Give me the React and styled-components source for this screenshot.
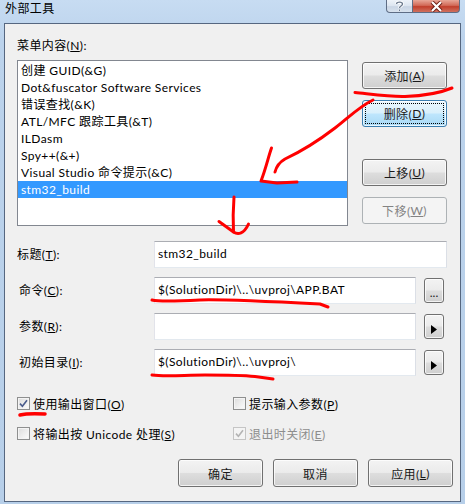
import React from "react";
import styled, { createGlobalStyle, css } from "styled-components";

const GlobalStyle = createGlobalStyle`
  html, body { margin: 0; padding: 0; }
  body {
    font-family: Lato, "Noto Sans CJK SC", sans-serif;
    font-size: 12px;
    letter-spacing: 0.4px;
    color: #000;
  }
  u { text-underline-offset: 1px; }
`;

const Window = styled.div`
  position: relative;
  width: 465px;
  height: 504px;
  box-sizing: border-box;
  padding: 0 4px 2px 4px;
  background: linear-gradient(to bottom, #c7dcf2 0px, #bcd3ec 40px, #b7cfe9 100%);
  display: flex;
  flex-direction: column;
  overflow: hidden;
`;

const TitleBar = styled.div`
  height: 23px;
  display: flex;
  justify-content: space-between;
  align-items: flex-start;
`;

const Title = styled.div`
  padding: 1px 0 0 1px;
  line-height: 16px;
`;

const CaptionButtons = styled.div`
  display: flex;
  margin-right: 1px;
`;

const CaptionButton = styled.div`
  box-sizing: border-box;
  height: 13px;
  width: ${(p) => p.$w}px;
  border: 1px solid #5e6d85;
  border-top: none;
  display: flex;
  align-items: center;
  justify-content: center;
  ${(p) =>
    p.$close
      ? css`
          border-left: none;
          border-radius: 0 0 4px 0;
          background: linear-gradient(to bottom, #e8a798 0%, #d26a58 45%, #c13f2c 55%, #d0715f 100%);
        `
      : css`
          border-radius: 0 0 0 4px;
          background: linear-gradient(to bottom, #eef3f9 0%, #dce5f0 50%, #c9d5e4 55%, #d8e2ee 100%);
        `}
`;

const Client = styled.div`
  flex: 1;
  background: #f0f0f0;
  border: 1px solid #566780;
  padding: 14px 7px 0 12px;
  display: flex;
  flex-direction: column;
`;

const TopSection = styled.div`
  display: flex;
  gap: 14px;
`;

const ListColumn = styled.div`
  display: flex;
  flex-direction: column;
`;

const Label = styled.div`
  line-height: 16px;
  margin-bottom: 6px;
`;

const ListBox = styled.div`
  box-sizing: border-box;
  width: 331px;
  height: 166px;
  border: 1px solid #828790;
  background: #fff;
  padding: 1px 0;
`;

const ListItem = styled.div`
  height: 17px;
  line-height: 17px;
  padding-left: 3px;
  white-space: nowrap;
  ${(p) =>
    p.$selected &&
    css`
      background: #3399ff;
      color: #fff;
    `}
`;

const SideButtons = styled.div`
  display: flex;
  flex-direction: column;
  padding-top: 24px;
`;

const Button = styled.div`
  box-sizing: border-box;
  width: 85px;
  height: ${(p) => p.$h || 27}px;
  margin-top: ${(p) => p.$mt || 0}px;
  border: 1px solid #707070;
  border-radius: 3px;
  background: linear-gradient(to bottom, #f3f3f3 0%, #ebebeb 48%, #dddddd 52%, #cfcfcf 100%);
  box-shadow: inset 0 0 0 1px rgba(255, 255, 255, 0.75);
  display: flex;
  align-items: center;
  justify-content: center;
  color: #1a1a1a;
  position: relative;
  ${(p) =>
    p.$focused &&
    css`
      border-color: #3c7fb1;
      background: linear-gradient(to bottom, #eaf6fd 0%, #d9f0fc 48%, #bee6fd 52%, #a7d9f5 100%);
      &::after {
        content: "";
        position: absolute;
        inset: 2px;
        border: 1px dotted #000;
      }
    `}
  ${(p) =>
    p.$disabled &&
    css`
      border-color: #adb2b5;
      background: #f4f4f4;
      box-shadow: none;
      color: #838383;
    `}
`;

const Fields = styled.div`
  display: flex;
  flex-direction: column;
  gap: 9px;
  margin-top: 15px;
  width: 430px;
`;

const FieldRow = styled.div`
  display: flex;
  align-items: center;
  height: 27px;
`;

const FieldLabel = styled.div`
  width: 137px;
  box-sizing: border-box;
  padding-left: ${(p) => p.$indent || 0}px;
  margin-top: -2px;
`;

const TextBox = styled.div`
  box-sizing: border-box;
  width: ${(p) => p.$w}px;
  height: 27px;
  border: 1px solid;
  border-color: #abadb3 #dbdfe6 #e3e9ef #e2e3ea;
  background: #fff;
  padding-left: 3px;
  line-height: 24px;
  white-space: nowrap;
  overflow: hidden;
`;

const SmallButton = styled(Button)`
  width: 20px;
  height: 25px;
  margin-left: 8px;
  line-height: 12px;
  padding-top: 5px;
  letter-spacing: 0;
`;

const Checks = styled.div`
  display: grid;
  grid-template-columns: 216px 1fr;
  row-gap: 13px;
  margin-top: 19px;
`;

const CheckRow = styled.div`
  display: flex;
  align-items: center;
  gap: 3px;
  height: 17px;
  color: ${(p) => (p.$disabled ? "#8d8d8d" : "#000")};
`;

const Box = styled.span`
  box-sizing: border-box;
  width: 13px;
  height: 13px;
  border: 1px solid ${(p) => (p.$disabled ? "#c5c5c5" : "#8e8f8f")};
  background: ${(p) =>
    p.$disabled ? "#f4f4f4" : "linear-gradient(135deg, #dcdcdc 0%, #f0f0f0 60%, #fdfdfd 100%)"};
  box-shadow: inset 0 0 0 1px #f4f4f4;
  display: flex;
  align-items: center;
  justify-content: center;
`;

const BottomButtons = styled.div`
  display: flex;
  justify-content: flex-end;
  gap: 10px;
  margin-top: 17px;
`;

const Overlay = styled.svg`
  position: absolute;
  left: 0;
  top: 0;
  pointer-events: none;
`;

const items = [
  "创建 GUID(&G)",
  "Dot&fuscator Software Services",
  "错误查找(&K)",
  "ATL/MFC 跟踪工具(&T)",
  "ILDasm",
  "Spy++(&+)",
  "Visual Studio 命令提示(&C)",
  "stm32_build",
];

function Check({ checked, disabled, children }) {
  return (
    <CheckRow $disabled={disabled}>
      <Box $disabled={disabled}>
        {checked && (
          <svg width="9" height="9" viewBox="0 0 9 9">
            <path
              d="M1 4.6 L3.4 7.2 L8 1.2"
              fill="none"
              stroke={disabled ? "#b4b4b4" : "#4a5c8c"}
              strokeWidth="1.6"
            />
          </svg>
        )}
      </Box>
      <span>{children}</span>
    </CheckRow>
  );
}

const Arrow = () => (
  <svg width="6" height="9" viewBox="0 0 6 9">
    <path d="M0 0 L6 4.5 L0 9 Z" fill="#000" />
  </svg>
);

export default function App() {
  return (
    <>
      <GlobalStyle />
      <Window>
        <TitleBar>
          <Title>外部工具</Title>
          <CaptionButtons>
            <CaptionButton $w={27}>
              <svg width="9" height="11" viewBox="0 0 9 11">
                <path
                  d="M1.5 3 C1.5 0.5 7.5 0.5 7.5 3 C7.5 5 4.5 5 4.5 7 M4.5 8.5 L4.5 10"
                  fill="none"
                  stroke="#fff"
                  strokeWidth="3"
                />
                <path
                  d="M1.5 3 C1.5 0.5 7.5 0.5 7.5 3 C7.5 5 4.5 5 4.5 7 M4.5 8.5 L4.5 10"
                  fill="none"
                  stroke="#6c7a8e"
                  strokeWidth="1.4"
                />
              </svg>
            </CaptionButton>
            <CaptionButton $w={47} $close>
              <svg width="13" height="11" viewBox="0 0 13 11">
                <path d="M2 1 L11 10 M11 1 L2 10" stroke="#6b1d14" strokeWidth="4" />
                <path d="M2 1 L11 10 M11 1 L2 10" stroke="#fff" strokeWidth="2.2" />
              </svg>
            </CaptionButton>
          </CaptionButtons>
        </TitleBar>
        <Client>
          <TopSection>
            <ListColumn>
              <Label>
                菜单内容(<u>N</u>):
              </Label>
              <ListBox>
                {items.map((t, i) => (
                  <ListItem key={t} $selected={i === items.length - 1}>
                    {t}
                  </ListItem>
                ))}
              </ListBox>
            </ListColumn>
            <SideButtons>
              <Button>
                添加(<u>A</u>)
              </Button>
              <Button $mt={11} $focused>
                删除(<u>D</u>)
              </Button>
              <Button $mt={32}>
                上移(<u>U</u>)
              </Button>
              <Button $mt={11} $disabled>
                下移(<u>W</u>)
              </Button>
            </SideButtons>
          </TopSection>

          <Fields>
            <FieldRow>
              <FieldLabel>
                标题(<u>T</u>):
              </FieldLabel>
              <TextBox $w={293}>stm32_build</TextBox>
            </FieldRow>
            <FieldRow>
              <FieldLabel $indent={2}>
                命令(<u>C</u>):
              </FieldLabel>
              <TextBox $w={262}>$(SolutionDir)\..\uvproj\APP.BAT</TextBox>
              <SmallButton>...</SmallButton>
            </FieldRow>
            <FieldRow>
              <FieldLabel $indent={2}>
                参数(<u>R</u>):
              </FieldLabel>
              <TextBox $w={262} />
              <SmallButton>
                <Arrow />
              </SmallButton>
            </FieldRow>
            <FieldRow>
              <FieldLabel $indent={2}>
                初始目录(<u>I</u>):
              </FieldLabel>
              <TextBox $w={262}>$(SolutionDir)\..\uvproj\</TextBox>
              <SmallButton>
                <Arrow />
              </SmallButton>
            </FieldRow>
          </Fields>

          <Checks>
            <Check checked>
              使用输出窗口(<u>O</u>)
            </Check>
            <Check>
              提示输入参数(<u>P</u>)
            </Check>
            <Check>
              将输出按 Unicode 处理(<u>S</u>)
            </Check>
            <Check checked disabled>
              退出时关闭(<u>E</u>)
            </Check>
          </Checks>

          <BottomButtons>
            <Button $h={28}>确定</Button>
            <Button $h={28}>取消</Button>
            <Button $h={28}>
              应用(<u>L</u>)
            </Button>
          </BottomButtons>
        </Client>

        <Overlay width="465" height="504" viewBox="0 0 465 504">
          <g fill="none" stroke="#ff0000" strokeWidth="3" strokeLinecap="round" strokeLinejoin="round">
            <path d="M355 92.5 C370 94 390 97 405 96.5 S440 93 452 88" />
            <path d="M373 100 C360 106 348 118 335 128 C318 141 300 152 285 159 C278 163 276 168 275 172" />
            <path d="M271.5 148 C268 158 266 168 261 181 L277 183 L297 182" />
            <path d="M234 197 C233 210 233 222 233.5 232" />
            <path d="M219 221.5 L233.5 232 C238 235 244 234 248.5 224" />
            <path d="M152 300 C160 302 180 301 200 300 S280 302 320 304 L328 307" />
            <path d="M152 375 C165 377 185 375 205 375 S240 375 255 376.5 L273 379" />
            <path d="M20 415 C28 413 37 413.5 45 414" strokeWidth="3.5" />
          </g>
        </Overlay>
      </Window>
    </>
  );
}
